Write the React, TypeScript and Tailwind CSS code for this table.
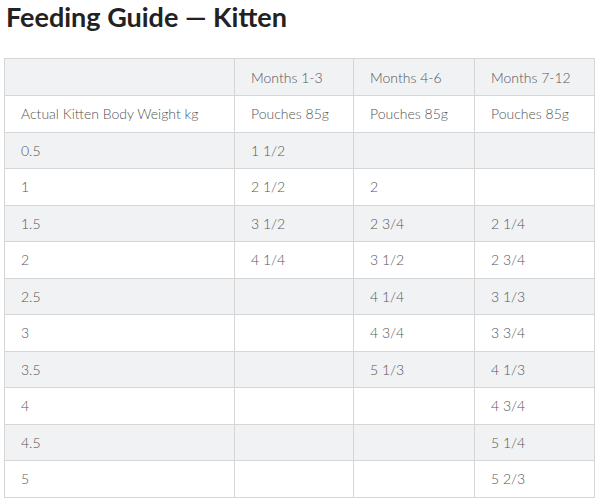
const header = ["", "Months 1-3", "Months 4-6", "Months 7-12"];

const rows = [
  ["Actual Kitten Body Weight kg", "Pouches 85g", "Pouches 85g", "Pouches 85g"],
  ["0.5", "1 1/2", "", ""],
  ["1", "2 1/2", "2", ""],
  ["1.5", "3 1/2", "2 3/4", "2 1/4"],
  ["2", "4 1/4", "3 1/2", "2 3/4"],
  ["2.5", "", "4 1/4", "3 1/3"],
  ["3", "", "4 3/4", "3 3/4"],
  ["3.5", "", "5 1/3", "4 1/3"],
  ["4", "", "", "4 3/4"],
  ["4.5", "", "", "5 1/4"],
  ["5", "", "", "5 2/3"],
];

const widths = ["w-[230px]", "w-[119px]", "w-[121px]", "w-[120px]"];

export default function App() {
  return (
    <div className="bg-white px-1 pt-0 font-['Lato',sans-serif] text-[#555]">
      <h1 className="pl-[2px] text-[27px] font-bold leading-[34px] text-[#222]">Feeding Guide — Kitten</h1>
      <table className="mt-[24px] w-[591px] table-fixed border-collapse border border-[#d6d6d6] text-[14px] font-light">
        <thead>
          <tr className="h-[37px] bg-[#f1f2f4]">
            {header.map((h, i) => (
              <th key={i} className={`${widths[i]} border border-[#d6d6d6] px-4 text-left font-light`}>
                {h}
              </th>
            ))}
          </tr>
        </thead>
        <tbody>
          {rows.map((r, ri) => (
            <tr key={ri} className={`h-[36.5px] ${ri % 2 === 1 ? "bg-[#f1f2f4]" : "bg-white"}`}>
              {r.map((c, ci) => (
                <td key={ci} className="border border-[#d6d6d6] px-4">
                  {c}
                </td>
              ))}
            </tr>
          ))}
        </tbody>
      </table>
    </div>
  );
}
